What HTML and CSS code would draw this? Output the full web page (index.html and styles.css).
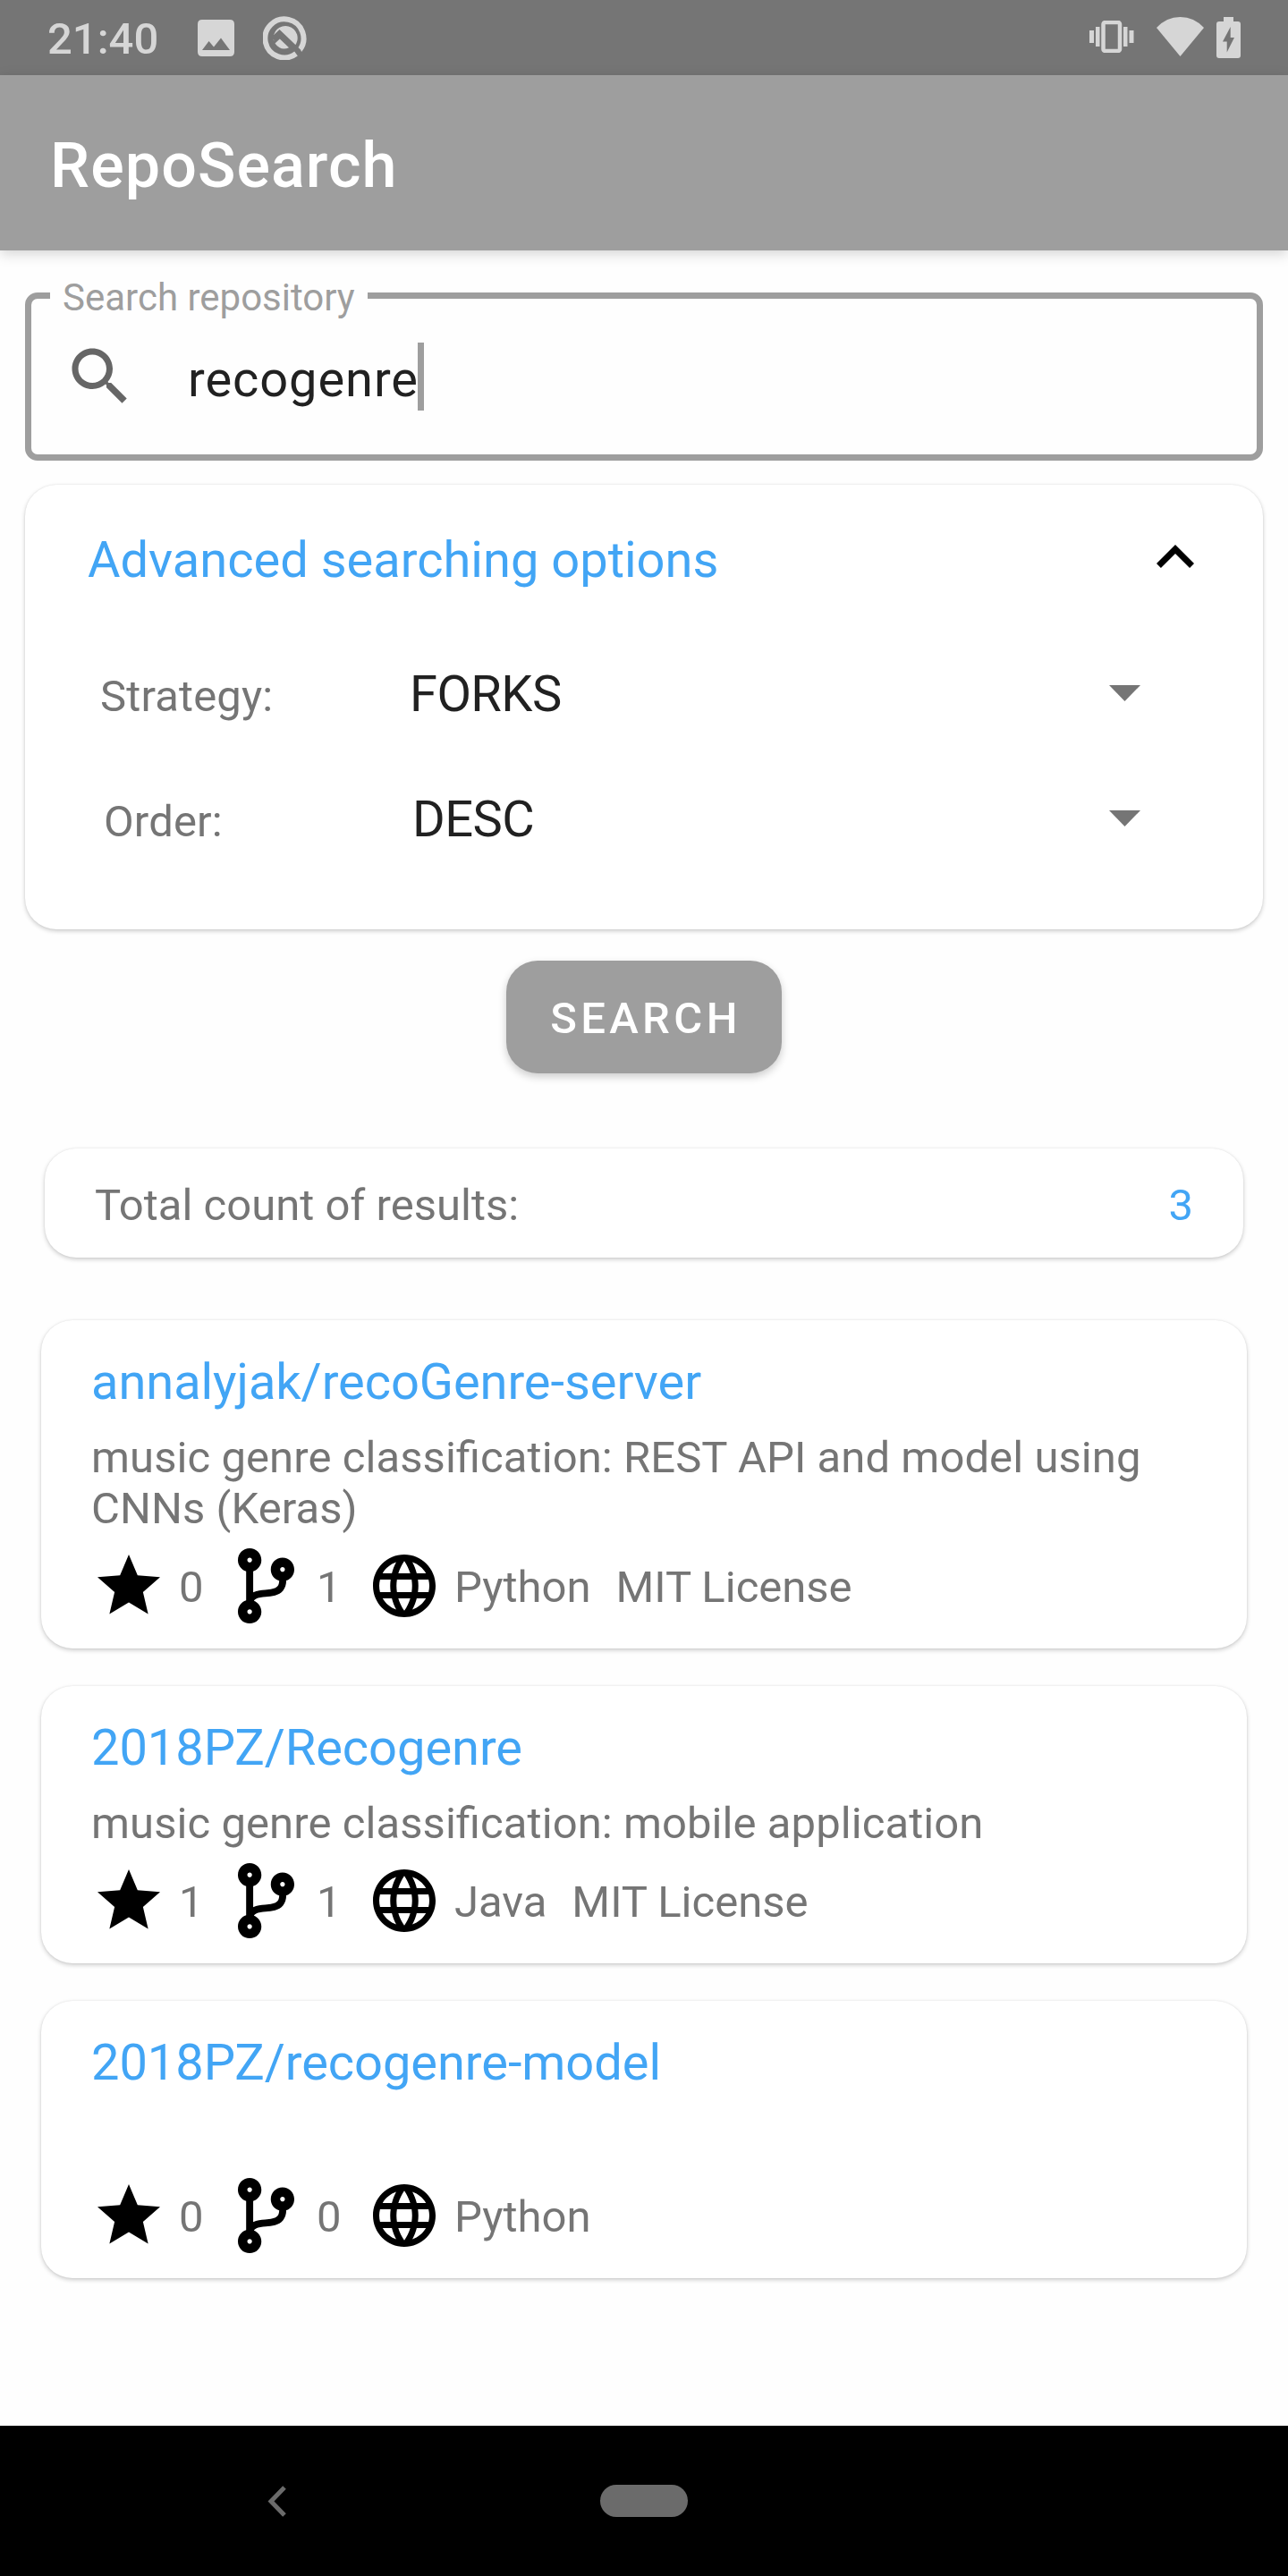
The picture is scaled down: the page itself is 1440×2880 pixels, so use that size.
FILE: index.html
```html
<!DOCTYPE html>
<html lang="en">
<head>
<meta charset="utf-8">
<title>RepoSearch</title>
<link rel="stylesheet" href="styles.css">
</head>
<body>
<svg class="sprite" aria-hidden="true">
  <symbol id="star" viewBox="0 0 24 24"><path d="M12,17.27L18.18,21l-1.64,-7.03L22,9.24l-7.19,-0.61L12,2 9.19,8.63 2,9.24l5.46,4.73L5.82,21z"/></symbol>
  <symbol id="branch" viewBox="0 0 384 512"><path d="M384 144c0-44.2-35.8-80-80-80s-80 35.8-80 80c0 36.4 24.3 67.1 57.5 76.8-.6 16.1-4.2 28.5-11 36.9-15.4 19.2-49.3 22.4-85.2 25.7-28.2 2.6-57.4 5.4-81.3 16.9v-144c32.5-10.2 56-40.5 56-76.3 0-44.2-35.8-80-80-80S0 35.8 0 80c0 35.8 23.5 66.1 56 76.3v199.3C23.5 365.9 0 396.2 0 432c0 44.2 35.8 80 80 80s80-35.8 80-80c0-34-21.2-63.1-51.2-74.6 3.1-5.2 7.8-9.8 14.9-13.4 16.2-8.2 40.4-10.4 66.1-12.8 42.2-3.9 90-8.4 118.2-43.4 14-17.4 21.1-39.8 21.6-67.9 31.6-10.8 54.4-40.7 54.4-75.9zM80 64c8.8 0 16 7.2 16 16s-7.2 16-16 16-16-7.2-16-16 7.2-16 16-16zm0 384c-8.8 0-16-7.2-16-16s7.2-16 16-16 16 7.2 16 16-7.2 16-16 16zm224-320c8.8 0 16 7.2 16 16s-7.2 16-16 16-16-7.2-16-16 7.2-16 16-16z"/></symbol>
  <symbol id="globe" viewBox="0 0 24 24"><path d="M11.99,2C6.47,2 2,6.48 2,12s4.47,10 9.99,10C17.52,22 22,17.52 22,12S17.52,2 11.99,2zM18.92,8h-2.95c-0.32,-1.25 -0.78,-2.45 -1.38,-3.56 1.84,0.63 3.37,1.91 4.33,3.56zM12,4.04c0.83,1.2 1.48,2.53 1.91,3.96h-3.82c0.43,-1.43 1.08,-2.76 1.91,-3.96zM4.26,14C4.1,13.36 4,12.69 4,12s0.1,-1.36 0.26,-2h3.38c-0.08,0.66 -0.14,1.32 -0.14,2 0,0.68 0.06,1.34 0.14,2L4.26,14zM5.08,16h2.95c0.32,1.25 0.78,2.45 1.38,3.56 -1.84,-0.63 -3.37,-1.9 -4.33,-3.56zM8.03,8L5.08,8c0.96,-1.66 2.49,-2.93 4.33,-3.56C8.81,5.55 8.35,6.75 8.03,8zM12,19.96c-0.83,-1.2 -1.48,-2.53 -1.91,-3.96h3.82c-0.43,1.43 -1.08,2.76 -1.91,3.96zM14.34,14L9.66,14c-0.09,-0.66 -0.16,-1.32 -0.16,-2 0,-0.68 0.07,-1.35 0.16,-2h4.68c0.09,0.65 0.16,1.32 0.16,2 0,0.68 -0.07,1.34 -0.16,2zM14.59,19.56c0.6,-1.11 1.06,-2.31 1.38,-3.56h2.95c-0.96,1.65 -2.49,2.93 -4.33,3.56zM16.36,14c0.08,-0.66 0.14,-1.32 0.14,-2 0,-0.68 -0.06,-1.34 -0.14,-2h3.38c0.16,0.64 0.26,1.31 0.26,2s-0.1,1.36 -0.26,2h-3.38z"/></symbol>
</svg>

<header class="status">
  <span class="clock">21:40</span>
  <svg class="s-image" viewBox="0 0 41 41"><path fill-rule="evenodd" d="M5 0H36Q41 0 41 5V36Q41 41 36 41H5Q0 41 0 36V5Q0 0 5 0ZM5 34H36L26 20.500L18 30.500L12.500 24Z"/></svg>
  <svg class="s-q" viewBox="0 0 50 50"><path class="ring" d="M41 39A21.500 21.500 0 1 0 37 43"/><path d="M35.200 34.500A13.500 13.500 0 1 0 12 28.500L18.500 21L33 35.200Z"/><path class="cut" d="M11 26.500L18.500 19.500L41 41"/><path class="piece" d="M13.500 31.500L18.800 26.500L29 36.200Q20 40.500 13.500 31.500Z"/></svg>
  <svg class="s-vibrate" viewBox="0 0 50 36"><path d="M0 11h5v14H0zM7 7h4.500v22H7zM38 7h4.500v22H38zM44.500 11h5v14h-5z"/><rect class="phone" x="15.500" y="2" width="18.500" height="32" rx="2"/></svg>
  <svg class="s-wifi" viewBox="0 0 53 44"><path d="M26.500 44L0 12Q11 0 26.500 0T53 12Z"/></svg>
  <svg class="s-battery" viewBox="0 0 27 46"><path fill-rule="evenodd" d="M8 0H19V5H24Q27 5 27 8V43Q27 46 24 46H3Q0 46 0 43V8Q0 5 3 5H8ZM15.700 11L7 27.500H11.700V39.500L20 23H15.700Z"/></svg>
</header>

<div class="appbar"><h1>RepoSearch</h1></div>

<main class="content">
  <fieldset class="field">
    <legend>Search repository</legend>
    <div class="field-row">
      <svg class="search-icon" viewBox="0 0 24 24"><path d="M15.500,14h-0.790l-0.280,-0.270C15.410,12.590 16,11.110 16,9.500 16,5.910 13.090,3 9.500,3S3,5.910 3,9.500 5.910,16 9.500,16c1.610,0 3.090,-0.590 4.230,-1.570l0.270,0.280v0.790l5,4.990L20.490,19l-4.990,-5zM9.500,14C7.010,14 5,11.990 5,9.500S7.010,5 9.500,5 14,7.010 14,9.500 11.990,14 9.500,14z"/></svg>
      <span class="query">recogenre</span><i class="cursor"></i>
    </div>
  </fieldset>

  <section class="card options">
    <div class="options-head">
      <h2>Advanced searching options</h2>
      <svg class="expand" viewBox="0 0 24 24"><path d="M12,8l-6,6 1.410,1.410L12,10.830l4.590,4.580L18,14z"/></svg>
    </div>
    <div class="option"><span class="option-label">Strategy:</span><span class="option-value">FORKS</span><i class="caret"></i></div>
    <div class="option order"><span class="option-label">Order:</span><span class="option-value">DESC</span><i class="caret"></i></div>
  </section>

  <button class="search">SEARCH</button>

  <section class="card total"><span>Total count of results:</span><span class="count">3</span></section>

  <div class="results">
    <article class="card result">
      <h3>annalyjak/recoGenre-server</h3>
      <p>music genre classification: REST API and model using CNNs (Keras)</p>
      <div class="meta">
        <svg class="star"><use href="#star"/></svg><span class="num stars">0</span>
        <svg class="branch"><use href="#branch"/></svg><span class="num forks">1</span>
        <svg class="globe"><use href="#globe"/></svg><span>Python</span><span class="license">MIT License</span>
      </div>
    </article>
    <article class="card result">
      <h3>2018PZ/Recogenre</h3>
      <p>music genre classification: mobile application</p>
      <div class="meta">
        <svg class="star"><use href="#star"/></svg><span class="num stars">1</span>
        <svg class="branch"><use href="#branch"/></svg><span class="num forks">1</span>
        <svg class="globe"><use href="#globe"/></svg><span>Java</span><span class="license">MIT License</span>
      </div>
    </article>
    <article class="card result">
      <h3>2018PZ/recogenre-model</h3>
      <p></p>
      <div class="meta">
        <svg class="star"><use href="#star"/></svg><span class="num stars">0</span>
        <svg class="branch"><use href="#branch"/></svg><span class="num forks">0</span>
        <svg class="globe"><use href="#globe"/></svg><span>Python</span>
      </div>
    </article>
  </div>
</main>

<nav class="navbar">
  <svg class="back" viewBox="0 0 21 35"><path d="M19 2L4 17.500L19 33"/></svg>
  <i class="home"></i>
</nav>
</body>
</html>
```
FILE: styles.css
```css
* { box-sizing: border-box; }

body {
  margin: 0;
  width: 1440px;
  height: 2880px;
  display: flex;
  flex-direction: column;
  background: #fefefe;
  color: #757575;
  font: 49px/58px Roboto, sans-serif;
  overflow: hidden;
}

h1, h2, h3, p { margin: 0; font-weight: 400; }
svg { display: block; flex: none; }
.sprite { display: none; }

/* Status bar */
.status {
  flex: none;
  display: flex;
  height: 84px;
  padding-left: 53px;
  background: #757575;
  color: #d6d6d6;
  fill: #d6d6d6;
}
.clock { width: 168px; font-weight: 500; line-height: 88px; }
.s-image { width: 41px; height: 41px; margin-top: 22px; }
.s-q { width: 50px; height: 50px; margin: 17px 0 0 32px; }
.s-q .ring { fill: none; stroke: #d6d6d6; stroke-width: 6; }
.s-q .cut { fill: none; stroke: #757575; stroke-width: 5; }
.s-vibrate { width: 50px; height: 36px; margin: 23px 0 0 874px; }
.s-vibrate .phone { fill: none; stroke: #d6d6d6; stroke-width: 4.500; }
.s-wifi { width: 53px; height: 44px; margin: 19px 0 0 25px; }
.s-battery { width: 27px; height: 46px; margin: 19px 0 0 14px; }

/* App bar */
.appbar {
  flex: none;
  position: relative;
  height: 196px;
  padding-left: 56px;
  background: #9e9e9e;
  box-shadow: 0 4px 14px rgba(0, 0, 0, .17);
}
.appbar h1 { color: #fff; font-size: 70px; font-weight: 500; line-height: 202px; letter-spacing: 0.0155em; }

.content { flex: 1; display: flex; flex-direction: column; }

/* Outlined search field */
.field {
  height: 211px;
  margin: 24px 28px 0;
  padding: 0 0 0 21px;
  border: 7px solid #9e9e9e;
  border-radius: 14px;
}
.field legend {
  width: 355px;
  height: 53px;
  padding: 4px 0 0 14px;
  color: #9e9e9e;
  font-size: 42px;
  line-height: 49px;
  white-space: nowrap;
}
.field-row { display: flex; padding: 21px 0 0 14px; }
.search-icon { width: 84px; height: 84px; margin-top: 1px; fill: #666; }
.query { width: 257px; margin-left: 56px; color: #212121; font-size: 56px; line-height: 92px; letter-spacing: 0.0165em; }
.cursor { width: 7px; height: 76px; margin-top: 5px; background: #9e9e9e; }

.card {
  background: #fff;
  border-radius: 35px;
  box-shadow: 0 2px 5px rgba(0, 0, 0, .2), 0 0 2px rgba(0, 0, 0, .08);
}

/* Advanced options */
.options { height: 497px; margin: 27px 28px 0; padding: 39px 56px 0 70px; }
.options-head { display: flex; justify-content: space-between; height: 116px; }
.options h2, .result h3 { color: #42a5f5; font-size: 56px; }
.options h2 { line-height: 90px; }
.expand { width: 84px; height: 84px; }
.option { display: flex; height: 140px; padding-left: 14px; line-height: 162px; }
.option-label { width: 346px; padding-top: 1px; letter-spacing: 0.003em; }
.option-value { width: 782px; color: #212121; font-size: 56px; line-height: 158px; letter-spacing: -0.01em; }
.order { padding-left: 18px; }
.order .option-label { width: 345px; }
.order .option-value { width: 779px; }
.caret {
  width: 35px;
  height: 18px;
  margin-top: 69px;
  background: #757575;
  clip-path: polygon(0 0, 100% 0, 50% 100%);
}

.search {
  align-self: center;
  width: 308px;
  height: 126px;
  margin-top: 35px;
  padding: 4px 0 0 4px;
  border: 0;
  border-radius: 35px;
  background: #9e9e9e;
  box-shadow: 0 4px 10px rgba(0, 0, 0, .2);
  color: #fff;
  font: 500 49px/122px Roboto, sans-serif;
  letter-spacing: 0.0893em;
}

.total {
  display: flex;
  justify-content: space-between;
  height: 122px;
  margin: 84px 50px 0;
  padding: 0 56px;
  line-height: 127px;
}
.count { color: #42a5f5; }

/* Repository cards */
.results { display: flex; flex-direction: column; gap: 42px; margin: 70px 46px 0; }
.result { padding: 28px 56px; }
.result h3 { line-height: 82px; letter-spacing: -0.001em; }
.result p {
  min-height: 57px;
  margin-top: 15px;
  line-height: 57px;
  letter-spacing: 0.0015em;
  font-feature-settings: "liga" 1;
}
.meta { display: flex; height: 84px; margin-top: 16px; line-height: 88px; }
.meta svg { height: 84px; }
.star, .globe { width: 84px; }
.stars { width: 66px; margin-left: 14px; }
.branch { width: 63px; }
.forks { width: 56px; margin-left: 25px; }
.globe + span { margin-left: 14px; }
.license { margin-left: 28px; }

/* Navigation bar */
.navbar {
  flex: none;
  display: flex;
  align-items: center;
  height: 168px;
  padding-left: 299px;
  background: #000;
}
.back { width: 21px; height: 35px; fill: none; stroke: #6b6b6b; stroke-width: 5; }
.home { width: 98px; height: 36px; margin-left: 351px; border-radius: 18px; background: #6b6b6b; }
```
